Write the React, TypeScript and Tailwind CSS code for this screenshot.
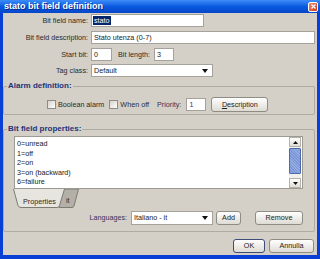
import React from "react";

const font = "font-['Liberation_Sans',Arial,sans-serif]";

function Field({ w, children }: { w: string; children?: React.ReactNode }) {
  return (
    <div
      className={`${w} h-[13px] bg-white border border-[#a5a29b] flex items-center pl-[2px] text-[7.2px] text-[#222] leading-none`}
    >
      {children}
    </div>
  );
}

function Combo({ w, h, value }: { w: string; h: string; value: string }) {
  return (
    <div
      className={`${w} ${h} bg-white border border-[#a5a29b] flex items-center pl-[2px] pr-[4px] text-[7.2px] text-[#222] leading-none`}
    >
      <span className="flex-1">{value}</span>
      <svg width="6" height="4" viewBox="0 0 6 4">
        <path d="M0 0 L6 0 L3 4 Z" fill="#111" />
      </svg>
    </div>
  );
}

function Btn({
  w,
  children,
  def,
}: {
  w: string;
  children: React.ReactNode;
  def?: boolean;
}) {
  return (
    <div
      className={`${w} h-[14px] rounded-[3px] border ${
        def ? "border-[#3d4c78]" : "border-[#8f8c85]"
      } bg-gradient-to-b from-white to-[#dedbd3] flex items-center justify-center text-[7.2px] text-[#222] leading-none`}
    >
      {children}
    </div>
  );
}

function Check() {
  return (
    <div className="w-[9px] h-[9px] border border-[#8f8c86] bg-gradient-to-br from-[#d6d3cb] to-white" />
  );
}

function Row({ label, children }: { label: string; children: React.ReactNode }) {
  return (
    <div className="flex items-center h-[13px]">
      <div className="w-[85px] text-right text-[7.2px] text-[#2a2a2a] leading-none">{label}</div>
      <div className="w-[3px]" />
      {children}
    </div>
  );
}

const items = ["0=unread", "1=off", "2=on", "3=on (backward)", "6=failure"];

export default function App() {
  return (
    <div className={`w-[320px] h-[259px] bg-[#0a3fd6] flex flex-col ${font}`}>
      {/* barra del titolo */}
      <div className="h-[13px] bg-gradient-to-b from-[#3d8cf7] via-[#0a5ae0] to-[#0646c8] flex items-center pl-[4px] pr-[2px]">
        <span className="flex-1 text-white font-bold text-[9px] leading-none [text-shadow:1px_1px_0_#0a2a8a]">
          stato bit field definition
        </span>
        <div className="w-[10px] h-[10px] rounded-[2px] border border-white bg-gradient-to-br from-[#f08a6a] to-[#c8381a] flex items-center justify-center">
          <svg width="5" height="5" viewBox="0 0 5 5">
            <path d="M0.5 0.5 L4.5 4.5 M4.5 0.5 L0.5 4.5" stroke="white" strokeWidth="1.2" />
          </svg>
        </div>
      </div>

      <div className="flex-1 mx-[3px] mb-[4px] bg-[#d4d0c8] flex flex-col pt-[1px]">
        <Row label="Bit field name:">
          <div className="w-[113px] h-[13px] bg-white border border-[#a5a29b] flex items-center pl-[1px]">
            <span className="bg-[#0a246a] text-white text-[7.2px] leading-none px-[1px] py-[1px]">stato</span>
          </div>
        </Row>
        <div className="mt-[4px]">
          <Row label="Bit field description:">
            <Field w="w-[224px]">Stato utenza (0-7)</Field>
          </Row>
        </div>
        <div className="mt-[4px]">
          <Row label="Start bit:">
            <Field w="w-[21px]">0</Field>
            <span className="ml-[6px] text-[7.2px] text-[#2a2a2a] leading-none">Bit length:</span>
            <div className="ml-[4px]">
              <Field w="w-[20px]">3</Field>
            </div>
          </Row>
        </div>
        <div className="mt-[3px]">
          <Row label="Tag class:">
            <Combo w="w-[122px]" h="h-[13px]" value="Default" />
          </Row>
        </div>

        {/* Alarm definition */}
        <div className="relative mt-[9px] mr-[2px] border border-[#aeaba3] rounded-[2px] pt-[10px] pb-[2px] pl-[43px]">
          <span className="absolute -top-[5px] left-[3px] bg-[#d4d0c8] px-[1px] text-[8px] font-bold text-[#1e3378] leading-none">
            Alarm definition:
          </span>
          <div className="flex items-center h-[15px] text-[7.2px] text-[#2a2a2a] leading-none">
            <Check />
            <span className="ml-[2px]">Boolean alarm</span>
            <div className="ml-[5px]">
              <Check />
            </div>
            <span className="ml-[2px]">When off</span>
            <span className="ml-[8px] text-[#3b3052]">Priority:</span>
            <div className="ml-[5px]">
              <Field w="w-[20px]">
                <span className="text-[#4a2a6a]">1</span>
              </Field>
            </div>
            <div className="ml-[5px]">
              <div className="w-[57px] h-[15px] rounded-[3px] border border-[#8f8c85] bg-gradient-to-b from-white to-[#dedbd3] flex items-center justify-center text-[7.2px] text-[#222] leading-none">
                <span>
                  <span className="underline">D</span>escription
                </span>
              </div>
            </div>
          </div>
        </div>

        {/* Bit field properties */}
        <div className="relative mt-[14px] mr-[2px] border border-[#aeaba3] rounded-[2px] pt-[6px] pb-[6px] pl-[10px] pr-[11px]">
          <span className="absolute -top-[5px] left-[3px] bg-[#d4d0c8] px-[1px] text-[8px] font-bold text-[#1e3378] leading-none">
            Bit field properties:
          </span>
          <div className="h-[53px] bg-white border border-[#9d9a93] flex">
            <div className="flex-1 pl-[2px] pt-[2px] text-[7.2px] leading-[9.5px] text-[#1a1a1a]">
              {items.map((it) => (
                <div key={it}>{it}</div>
              ))}
            </div>
            <div className="w-[12px] mr-[1px] flex flex-col bg-[#f1f0ea]">
              <div className="h-[10px] bg-gradient-to-b from-white to-[#e0ddd5] border border-[#b5b2aa] flex items-center justify-center">
                <svg width="5" height="3" viewBox="0 0 5 3">
                  <path d="M0 3 L5 3 L2.5 0 Z" fill="#111" />
                </svg>
              </div>
              <div className="mt-[1px] h-[26px] border border-[#4b68b0] rounded-[1px] bg-[repeating-linear-gradient(45deg,#7b97d6_0px,#7b97d6_1px,#93abe0_1px,#93abe0_2px)]" />
              <div className="flex-1" />
              <div className="h-[10px] bg-gradient-to-b from-white to-[#e0ddd5] border border-[#b5b2aa] flex items-center justify-center">
                <svg width="5" height="3" viewBox="0 0 5 3">
                  <path d="M0 0 L5 0 L2.5 3 Z" fill="#111" />
                </svg>
              </div>
            </div>
          </div>

          {/* linguette */}
          <div className="relative -ml-[1px] w-[70px] h-[19px] text-[7.2px] text-[#2a2a2a] leading-none">
            <svg className="absolute inset-0" width="70" height="19" viewBox="0 0 70 19">
              <path d="M49 0 L65.5 0 L61 17 Q60.5 18.5 59 18.5 L46 18.5 Z" fill="#b3b0a8" stroke="#7d7a73" />
              <path d="M0.5 0 L5 16.5 Q5.8 18.5 8 18.5 L44 18.5 Q45.8 18.5 46.5 16.5 L51.5 0" fill="#e7e5df" stroke="#7d7a73" />
            </svg>
            <span className="absolute left-[10px] top-[9px]">Properties</span>
            <span className="absolute left-[53px] top-[8px]">it</span>
          </div>

          <div className="mt-[3px] flex items-center justify-end h-[14px] text-[7.2px] leading-none">
            <span className="text-[#3b3052] mr-[4px]">Languages:</span>
            <Combo w="w-[82px]" h="h-[14px]" value="Italiano - it" />
            <div className="ml-[3px]">
              <Btn w="w-[25px]">Add</Btn>
            </div>
            <div className="ml-[14px]">
              <Btn w="w-[48px]">Remove</Btn>
            </div>
          </div>
        </div>

        <div className="mt-[7px] flex justify-end pr-[3px]">
          <Btn w="w-[32px]" def>
            OK
          </Btn>
          <div className="ml-[4px]">
            <Btn w="w-[45px]">Annulla</Btn>
          </div>
        </div>
      </div>
    </div>
  );
}
